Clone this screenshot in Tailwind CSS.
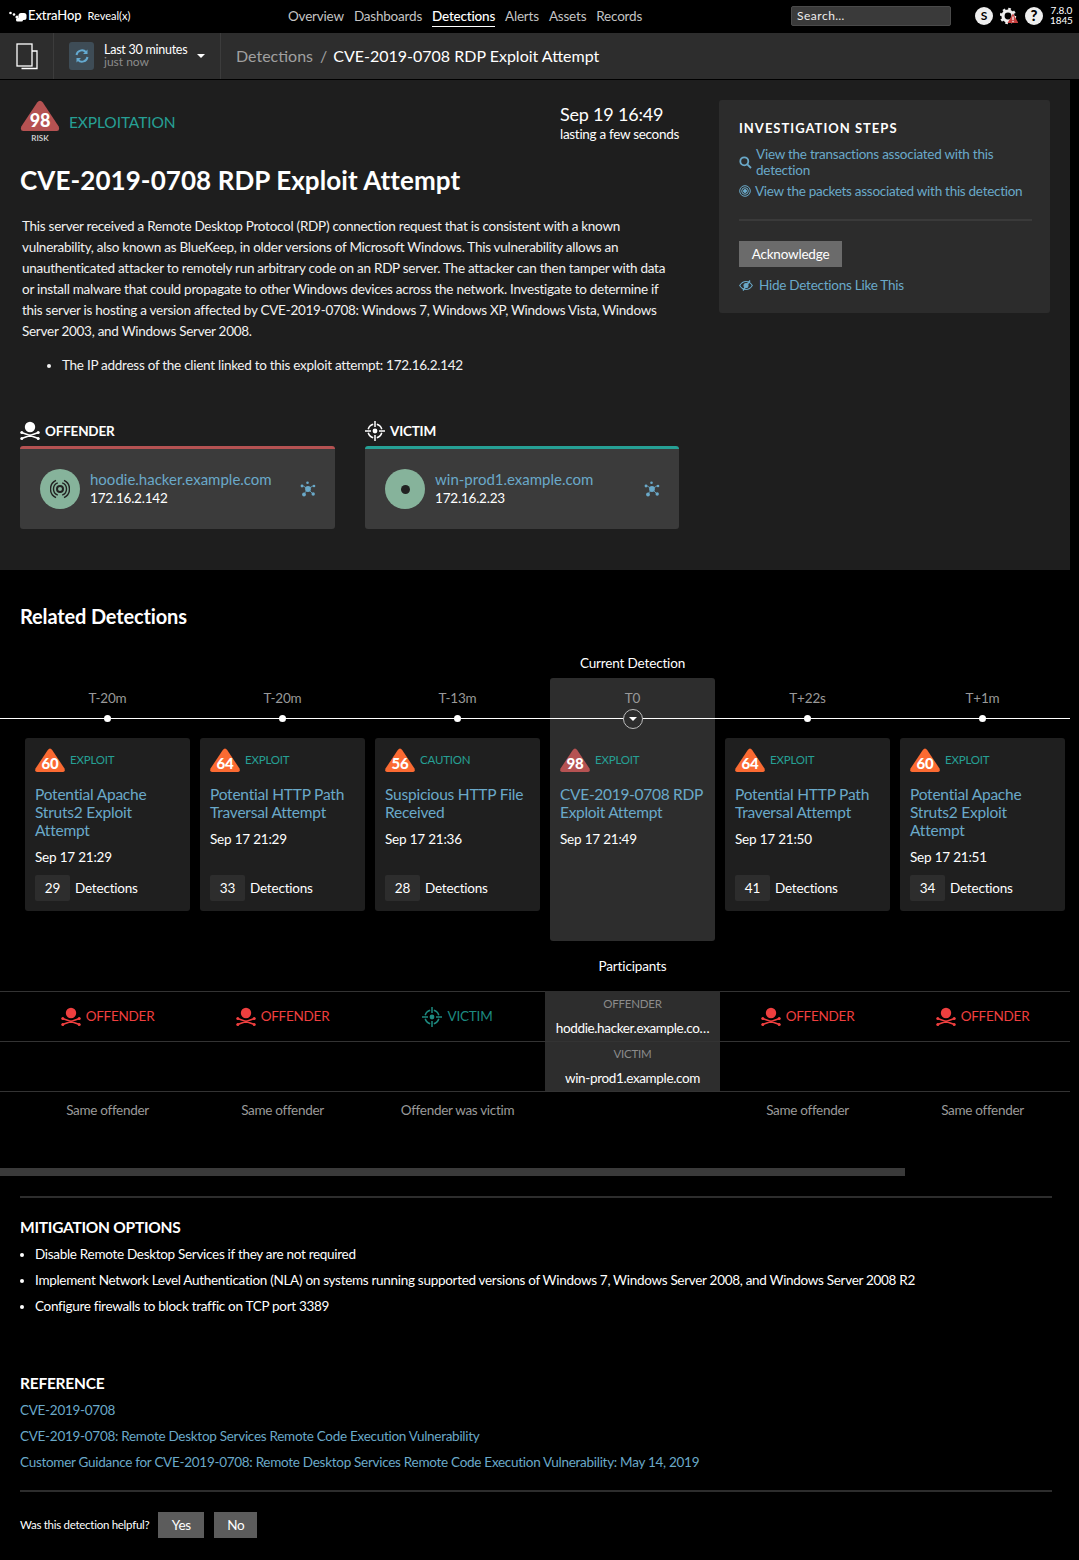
<!DOCTYPE html>
<html lang="en">
<head>
<meta charset="UTF-8">
<title>CVE-2019-0708 RDP Exploit Attempt</title>
<script src="https://cdn.jsdelivr.net/npm/@tailwindcss/browser@4"></script>
</head>
<body class="bg-black text-white font-['Lato',sans-serif] w-[1079px] h-[1560px] overflow-hidden text-[13.5px] tracking-[-0.2px]">
<svg class="hidden">
  <symbol id="skull" viewBox="0 0 20 20">
    <circle cx="10" cy="6" r="5.2"/>
    <path d="M1.5 11.5 L18.5 17.5 M18.5 11.5 L1.5 17.5" stroke="currentColor" stroke-width="1.6" stroke-linecap="round" fill="none"/>
    <circle cx="1.8" cy="11.5" r="1.5"/><circle cx="18.2" cy="11.5" r="1.5"/><circle cx="1.8" cy="17.5" r="1.5"/><circle cx="18.2" cy="17.5" r="1.5"/>
  </symbol>
  <symbol id="target" viewBox="0 0 20 20">
    <circle cx="10" cy="10" r="2.4" fill="currentColor"/>
    <path d="M10 0v6M10 14v6M0 10h6M14 10h6M3.24 8.19A7 7 0 0 1 8.19 3.24M11.81 3.24A7 7 0 0 1 16.76 8.19M16.76 11.81A7 7 0 0 1 11.81 16.76M8.19 16.76A7 7 0 0 1 3.24 11.81" stroke="currentColor" stroke-width="1.5" fill="none"/>
  </symbol>
  <symbol id="cluster" viewBox="0 0 16 16">
    <path d="M8 8L2.5 4.5M8 8L13.5 4.5M8 8L3.5 13.5M8 8L13 13" stroke="#6aa9c9" stroke-width="0.8"/>
    <circle cx="8" cy="8" r="2.9" fill="#6aa9c9"/><circle cx="7.5" cy="1.8" r="1.3" fill="#6aa9c9"/><circle cx="2" cy="5" r="1.4" fill="#6aa9c9"/><circle cx="14" cy="5" r="1.3" fill="#6aa9c9"/><circle cx="4" cy="13.5" r="1.9" fill="#6aa9c9"/><circle cx="13.2" cy="13" r="1.7" fill="#6aa9c9"/>
  </symbol>
  <symbol id="tri" viewBox="0 0 30 24">
    <path d="M15 0.5 Q16.2 0.5 17.2 2 L29.5 20.5 Q30.5 24 28 24 L2 24 Q-0.5 24 0.5 20.5 L12.8 2 Q13.8 0.5 15 0.5Z" fill="currentColor"/>
  </symbol>
</svg>

<!-- top nav -->
<header class="h-[33px] pb-px bg-black flex items-center">
  <div class="w-[288px] flex items-center pl-[9px] gap-px">
    <svg width="18" height="11" viewBox="0 0 18 11" fill="#fff"><circle cx="1.5" cy="2" r="1.3"/><circle cx="5" cy="3.5" r="1.3"/><circle cx="8" cy="6" r="1.6"/><rect x="9.5" y="2" width="8" height="7" rx="2.5"/><rect x="7" y="7" width="7" height="3.5" rx="1.5"/></svg>
    <span class="text-[13px] font-medium tracking-[-0.1px]">ExtraHop</span>
    <span class="text-[11px] ml-[5px] tracking-[0px]">Reveal(x)</span>
  </div>
  <nav class="flex gap-[10px] text-[13.5px] text-[#c4c4c4]">
    <span>Overview</span><span>Dashboards</span><span class="text-white font-medium border-b border-white -mb-px">Detections</span><span>Alerts</span><span>Assets</span><span>Records</span>
  </nav>
  <div class="ml-auto mr-[128px] w-[160px] h-[20px] rounded-[2px] bg-[#3a3a3a] border border-[#4a4a4a] px-[5px] text-[12px] tracking-[0.5px] leading-[18px] text-[#eee]">Search…</div>
  <div class="absolute left-[975px] top-[6px] flex items-center">
    <span class="w-[18px] h-[18px] rounded-full bg-[#eee] text-black text-[12px] font-bold flex items-center justify-center">S</span>
    <svg class="ml-[7px]" width="18" height="18" viewBox="0 0 18 18"><circle cx="8" cy="9" r="5" fill="none" stroke="#eee" stroke-width="3.2"/><circle cx="8" cy="9" r="7" fill="none" stroke="#eee" stroke-width="2.4" stroke-dasharray="2.6 2.9"/><path d="M13 6.5 L18.5 16 L7.5 16Z" fill="#c8403f"/><rect x="12.4" y="9.5" width="1.2" height="3.7" fill="#fff"/><rect x="12.4" y="14" width="1.2" height="1.2" fill="#fff"/></svg>
    <span class="ml-[7px] w-[18px] h-[18px] rounded-full bg-[#eee] text-black text-[15px] font-black flex items-center justify-center">?</span>
    <div class="ml-[7px] text-[10px] leading-[9.5px] text-center tracking-[-0.1px]">7.8.0<br>1845</div>
  </div>
</header>

<!-- sub bar -->
<div class="h-[47px] bg-[#2d2d2d] border-b border-black flex items-center">
  <div class="w-[54px] h-full border-r border-[#3c3c3c] flex items-center justify-center">
    <svg width="22" height="27" viewBox="0 0 22 27" fill="none" stroke="#fff" stroke-width="1.3"><path d="M5.5 25.5H21V8H16"/><rect x="1" y="1" width="15" height="22" fill="#2d2d2d"/></svg>
  </div>
  <div class="w-[167px] h-full border-r border-[#3c3c3c] flex items-center pl-[15px]">
    <div class="w-[25px] h-[28px] rounded-[3px] bg-[#3e4c56] flex items-center justify-center">
      <svg width="14" height="14" viewBox="0 0 14 14" fill="none" stroke="#64a9d0" stroke-width="2"><path d="M1.5 6A5.5 5.5 0 0 1 11 3.2M12.5 8A5.5 5.5 0 0 1 3 10.8"/><path d="M12.5 0.5V5H8Z M1.5 13.5V9H6Z" fill="#64a9d0" stroke="none"/></svg>
    </div>
    <div class="ml-[10px] leading-[12px]">
      <div class="text-[12.5px] text-white tracking-[-0.25px]">Last 30 minutes</div>
      <div class="text-[12px] text-[#8b8b8b] tracking-[0px]">just now</div>
    </div>
    <span class="ml-[10px] w-0 h-0 border-x-[4px] border-x-transparent border-t-[4.5px] border-t-white"></span>
  </div>
  <div class="ml-[15px] text-[16px] text-[#a0a0a0] tracking-[0px]">Detections<span class="ml-[7px] mr-[6px]">/</span><span class="text-white">CVE-2019-0708 RDP Exploit Attempt</span></div>
</div>

<!-- detection panel -->
<section class="w-[1070px] h-[490px] bg-[#1e1e1e] flex">
  <div class="w-[719px] pl-[20px] pt-[20px]">
    <div class="flex justify-between w-[659px]">
      <div class="flex h-[42px]">
        <div class="w-[40px] flex flex-col items-center">
          <div class="relative w-[40px] h-[31px] text-[#b55252]">
            <svg class="absolute inset-0" width="40" height="31"><use href="#tri"/></svg>
            <span class="absolute inset-x-0 top-[9px] text-center text-[18px] leading-[22px] font-black text-white">98</span>
          </div>
          <div class="text-[8px] font-bold leading-[11px] text-[#ccc] mt-[2px] translate-y-[2px] tracking-[0px]">RISK</div>
        </div>
        <div class="ml-[9px] mt-[12px] text-[15.5px] leading-[20px] tracking-[-0.1px] text-[#26a095]">EXPLOITATION</div>
      </div>
      <div class="mt-[4px] w-[119px] whitespace-nowrap">
        <div class="text-[18px] leading-[20px]">Sep 19 16:49</div>
        <div class="text-[13.5px] leading-[20px] tracking-[-0.3px]">lasting a few seconds</div>
      </div>
    </div>
    <h1 class="mt-[18px] text-[26px] leading-[36px] font-bold tracking-[0.08px]">CVE-2019-0708 RDP Exploit Attempt</h1>
    <p class="ml-[2px] mt-[18px] w-[680px] text-[13.5px] leading-[21px] tracking-[-0.27px] text-[#f2f2f2]">This server received a Remote Desktop Protocol (RDP) connection request that is consistent with a known<br>vulnerability, also known as BlueKeep, in older versions of Microsoft Windows. This vulnerability allows an<br>unauthenticated attacker to remotely run arbitrary code on an RDP server. The attacker can then tamper with data<br>or install malware that could propagate to other Windows devices across the network. Investigate to determine if<br>this server is hosting a version affected by CVE-2019-0708: Windows 7, Windows XP, Windows Vista, Windows<br>Server 2003, and Windows Server 2008.</p>
    <ul class="mt-[13px] ml-[42px] list-disc text-[13.5px] leading-[21px] tracking-[-0.27px] text-[#f2f2f2]"><li>The IP address of the client linked to this exploit attempt: 172.16.2.142</li></ul>
    <div class="mt-[45px] flex gap-[30px]">
      <div class="w-[315px]">
        <div class="flex items-center gap-[5px] h-[20px] text-[13.5px] font-bold uppercase"><svg class="text-white fill-current" width="20" height="20"><use href="#skull"/></svg>Offender</div>
        <div class="mt-[5px] h-[83px] bg-[#3b3b3b] rounded-[3px] border-t-[3px] border-[#b55252] flex items-center pl-[20px] pr-[19px]">
          <div class="w-[40px] h-[40px] rounded-full bg-[#86b39b] flex items-center justify-center">
            <svg width="20" height="20" viewBox="0 0 20 20" fill="none" stroke="#222" stroke-width="1.4"><circle cx="10" cy="10" r="3" stroke-width="2"/><path d="M7.78 3.89A6.5 6.5 0 0 0 7.78 16.11M12.22 3.89A6.5 6.5 0 0 1 12.22 16.11M5.99 1.39A9.5 9.5 0 0 0 5.99 18.61M14.01 1.39A9.5 9.5 0 0 1 14.01 18.61"/></svg>
          </div>
          <div class="ml-[10px] leading-[19px]">
            <div class="text-[15px] text-[#6aa9c9] tracking-[0px]">hoodie.hacker.example.com</div>
            <div class="text-[13.5px]">172.16.2.142</div>
          </div>
          <svg class="ml-auto" width="16" height="16"><use href="#cluster"/></svg>
        </div>
      </div>
      <div class="w-[314px]">
        <div class="flex items-center gap-[5px] h-[20px] text-[13.5px] font-bold uppercase"><svg class="text-white" width="20" height="20"><use href="#target"/></svg>Victim</div>
        <div class="mt-[5px] h-[83px] bg-[#3b3b3b] rounded-[3px] border-t-[3px] border-[#26a095] flex items-center pl-[20px] pr-[19px]">
          <div class="w-[40px] h-[40px] rounded-full bg-[#86b39b] flex items-center justify-center"><span class="w-[9px] h-[9px] rounded-full bg-[#222]"></span></div>
          <div class="ml-[10px] leading-[19px]">
            <div class="text-[15px] text-[#6aa9c9] tracking-[0px]">win-prod1.example.com</div>
            <div class="text-[13.5px]">172.16.2.23</div>
          </div>
          <svg class="ml-auto" width="16" height="16"><use href="#cluster"/></svg>
        </div>
      </div>
    </div>
  </div>
  <aside class="mt-[20px] w-[331px] h-[213px] bg-[#2c2c2c] rounded-[3px] pt-[20px] px-[20px]">
    <h2 class="text-[13px] leading-[17px] font-bold tracking-[1px]">INVESTIGATION STEPS</h2>
    <div class="mt-[9px] flex items-center text-[13.5px] leading-[16px] text-[#6aa9c9] tracking-[-0.25px]">
      <svg width="13" height="13" viewBox="0 0 13 13" fill="none" stroke="#6aa9c9" stroke-width="1.8"><circle cx="5.3" cy="5.3" r="4"/><path d="M8.3 8.3L12 12"/></svg>
      <span class="ml-[4px]">View the transactions associated with this<br>detection</span>
    </div>
    <div class="mt-[5px] flex items-center text-[13.5px] leading-[16px] text-[#6aa9c9] tracking-[-0.28px] whitespace-nowrap">
      <svg width="12" height="12" viewBox="0 0 12 12" fill="none" stroke="#6aa9c9"><circle cx="6" cy="6" r="5.3"/><circle cx="6" cy="6" r="3.3"/><circle cx="6" cy="6" r="1.5" fill="#6aa9c9"/></svg>
      <span class="ml-[4px]">View the packets associated with this detection</span>
    </div>
    <div class="mt-[20px] w-[293px] h-[2px] bg-[#3a3a3a] -mr-[2px]"></div>
    <button class="mt-[20px] block w-[103px] h-[26px] bg-[#6b6b6b] text-[13.5px] leading-[26px] text-white tracking-[-0.2px]">Acknowledge</button>
    <div class="mt-[10px] flex items-center text-[13.5px] leading-[17px] text-[#6aa9c9] tracking-[-0.25px]">
      <svg width="14" height="11" viewBox="0 0 14 11" fill="none" stroke="#6aa9c9" stroke-width="1.1"><path d="M0.7 5.5C3 1.8 5 1.5 7 1.5S11 1.8 13.3 5.5C11 9.2 9 9.5 7 9.5S3 9.2 0.7 5.5Z"/><circle cx="7" cy="5.5" r="2" fill="#6aa9c9"/><path d="M11 0.5L4 10.5" stroke-width="1.4"/></svg>
      <span class="ml-[6px]">Hide Detections Like This</span>
    </div>
  </aside>
</section>

<!-- related -->
<section class="relative w-[1070px] h-[606px]">
  <h2 class="pl-[20px] pt-[32px] text-[20px] leading-[28px] font-bold tracking-[-0.15px]">Related Detections</h2>
  <div class="absolute left-[545px] top-[83px] w-[175px] text-center text-[13.5px] leading-[20px] tracking-[-0.15px]">Current Detection</div>

  <div class="absolute left-0 top-[148px] w-[1070px] h-px bg-white z-10"></div>

  <div class="mt-[48px] ml-[20px] grid grid-cols-[repeat(6,175px)] h-[263px]">
    <div class="px-[5px]">
      <div class="h-[40px] pt-[10px] text-center text-[13.5px] leading-[20px] text-[#999]">T-20m</div>
      <div class="h-[20px] flex justify-center items-start relative z-20"><span class="w-[7px] h-[7px] -mt-[3px] rounded-full bg-white"></span></div>
      <div class="h-[173px] bg-[#1f1f1f] rounded-[3px] p-[10px] flex flex-col">
        <div class="flex items-center h-[24px]"><div class="relative w-[30px] h-[24px] text-[#fb6a32]"><svg class="absolute inset-0" width="30" height="24"><use href="#tri"/></svg><span class="absolute inset-x-0 top-[5px] text-center text-[15px] leading-[20px] font-black text-white">60</span></div><span class="ml-[5px] text-[11.5px] text-[#26a095]">EXPLOIT</span></div>
        <div class="mt-[13px] text-[15.5px] leading-[18px] text-[#6aa9c9] tracking-[-0.22px]">Potential Apache<br>Struts2 Exploit<br>Attempt</div>
        <div class="mt-[9px] text-[13.5px] leading-[18px]">Sep 17 21:29</div>
        <div class="mt-auto flex items-center text-[13.5px]"><span class="w-[35px] h-[26px] rounded-[2px] bg-[#2d2d2d] text-center leading-[26px]">29</span><span class="ml-[5px]">Detections</span></div>
      </div>
    </div>
    <div class="px-[5px]">
      <div class="h-[40px] pt-[10px] text-center text-[13.5px] leading-[20px] text-[#999]">T-20m</div>
      <div class="h-[20px] flex justify-center items-start relative z-20"><span class="w-[7px] h-[7px] -mt-[3px] rounded-full bg-white"></span></div>
      <div class="h-[173px] bg-[#1f1f1f] rounded-[3px] p-[10px] flex flex-col">
        <div class="flex items-center h-[24px]"><div class="relative w-[30px] h-[24px] text-[#fb6a32]"><svg class="absolute inset-0" width="30" height="24"><use href="#tri"/></svg><span class="absolute inset-x-0 top-[5px] text-center text-[15px] leading-[20px] font-black text-white">64</span></div><span class="ml-[5px] text-[11.5px] text-[#26a095]">EXPLOIT</span></div>
        <div class="mt-[13px] text-[15.5px] leading-[18px] text-[#6aa9c9] tracking-[-0.22px]">Potential HTTP Path<br>Traversal Attempt</div>
        <div class="mt-[9px] text-[13.5px] leading-[18px]">Sep 17 21:29</div>
        <div class="mt-auto flex items-center text-[13.5px]"><span class="w-[35px] h-[26px] rounded-[2px] bg-[#2d2d2d] text-center leading-[26px]">33</span><span class="ml-[5px]">Detections</span></div>
      </div>
    </div>
    <div class="px-[5px]">
      <div class="h-[40px] pt-[10px] text-center text-[13.5px] leading-[20px] text-[#999]">T-13m</div>
      <div class="h-[20px] flex justify-center items-start relative z-20"><span class="w-[7px] h-[7px] -mt-[3px] rounded-full bg-white"></span></div>
      <div class="h-[173px] bg-[#1f1f1f] rounded-[3px] p-[10px] flex flex-col">
        <div class="flex items-center h-[24px]"><div class="relative w-[30px] h-[24px] text-[#fb6a32]"><svg class="absolute inset-0" width="30" height="24"><use href="#tri"/></svg><span class="absolute inset-x-0 top-[5px] text-center text-[15px] leading-[20px] font-black text-white">56</span></div><span class="ml-[5px] text-[11.5px] text-[#26a095]">CAUTION</span></div>
        <div class="mt-[13px] text-[15.5px] leading-[18px] text-[#6aa9c9] tracking-[-0.22px]">Suspicious HTTP File<br>Received</div>
        <div class="mt-[9px] text-[13.5px] leading-[18px]">Sep 17 21:36</div>
        <div class="mt-auto flex items-center text-[13.5px]"><span class="w-[35px] h-[26px] rounded-[2px] bg-[#2d2d2d] text-center leading-[26px]">28</span><span class="ml-[5px]">Detections</span></div>
      </div>
    </div>
    <div class="px-[5px]">
      <div class="h-full bg-[#2d2d2d] rounded-[3px]">
        <div class="h-[40px] pt-[10px] text-center text-[13.5px] leading-[20px] text-[#999]">T0</div>
        <div class="h-[20px] flex justify-center items-start relative z-20"><span class="w-[20px] h-[20px] -mt-[9px] rounded-full bg-[#2d2d2d] border border-[#bdbdbd] flex items-center justify-center"><span class="w-0 h-0 border-x-[4px] border-x-transparent border-t-[4px] border-t-white"></span></span></div>
        <div class="p-[10px] flex flex-col">
          <div class="flex items-center h-[24px]"><div class="relative w-[30px] h-[24px] text-[#b55252]"><svg class="absolute inset-0" width="30" height="24"><use href="#tri"/></svg><span class="absolute inset-x-0 top-[5px] text-center text-[15px] leading-[20px] font-black text-white">98</span></div><span class="ml-[5px] text-[11.5px] text-[#26a095]">EXPLOIT</span></div>
          <div class="mt-[13px] text-[15.5px] leading-[18px] text-[#6aa9c9] tracking-[-0.3px] whitespace-nowrap">CVE-2019-0708 RDP<br>Exploit Attempt</div>
          <div class="mt-[9px] text-[13.5px] leading-[18px]">Sep 17 21:49</div>
        </div>
      </div>
    </div>
    <div class="px-[5px]">
      <div class="h-[40px] pt-[10px] text-center text-[13.5px] leading-[20px] text-[#999]">T+22s</div>
      <div class="h-[20px] flex justify-center items-start relative z-20"><span class="w-[7px] h-[7px] -mt-[3px] rounded-full bg-white"></span></div>
      <div class="h-[173px] bg-[#1f1f1f] rounded-[3px] p-[10px] flex flex-col">
        <div class="flex items-center h-[24px]"><div class="relative w-[30px] h-[24px] text-[#fb6a32]"><svg class="absolute inset-0" width="30" height="24"><use href="#tri"/></svg><span class="absolute inset-x-0 top-[5px] text-center text-[15px] leading-[20px] font-black text-white">64</span></div><span class="ml-[5px] text-[11.5px] text-[#26a095]">EXPLOIT</span></div>
        <div class="mt-[13px] text-[15.5px] leading-[18px] text-[#6aa9c9] tracking-[-0.22px]">Potential HTTP Path<br>Traversal Attempt</div>
        <div class="mt-[9px] text-[13.5px] leading-[18px]">Sep 17 21:50</div>
        <div class="mt-auto flex items-center text-[13.5px]"><span class="w-[35px] h-[26px] rounded-[2px] bg-[#2d2d2d] text-center leading-[26px]">41</span><span class="ml-[5px]">Detections</span></div>
      </div>
    </div>
    <div class="px-[5px]">
      <div class="h-[40px] pt-[10px] text-center text-[13.5px] leading-[20px] text-[#999]">T+1m</div>
      <div class="h-[20px] flex justify-center items-start relative z-20"><span class="w-[7px] h-[7px] -mt-[3px] rounded-full bg-white"></span></div>
      <div class="h-[173px] bg-[#1f1f1f] rounded-[3px] p-[10px] flex flex-col">
        <div class="flex items-center h-[24px]"><div class="relative w-[30px] h-[24px] text-[#fb6a32]"><svg class="absolute inset-0" width="30" height="24"><use href="#tri"/></svg><span class="absolute inset-x-0 top-[5px] text-center text-[15px] leading-[20px] font-black text-white">60</span></div><span class="ml-[5px] text-[11.5px] text-[#26a095]">EXPLOIT</span></div>
        <div class="mt-[13px] text-[15.5px] leading-[18px] text-[#6aa9c9] tracking-[-0.22px]">Potential Apache<br>Struts2 Exploit<br>Attempt</div>
        <div class="mt-[9px] text-[13.5px] leading-[18px]">Sep 17 21:51</div>
        <div class="mt-auto flex items-center text-[13.5px]"><span class="w-[35px] h-[26px] rounded-[2px] bg-[#2d2d2d] text-center leading-[26px]">34</span><span class="ml-[5px]">Detections</span></div>
      </div>
    </div>
  </div>

  <div class="mt-[15px] ml-[545px] w-[175px] text-center text-[13.5px] leading-[20px] tracking-[-0.15px]">Participants</div>

  <div class="mt-[15px] border-t border-[#333] h-[50px] grid grid-cols-[repeat(6,175px)] pl-[20px]">
    <div class="flex items-center justify-center gap-[5px] text-[13.5px] uppercase text-[#ef3f3f] tracking-[-0.25px]"><svg class="fill-current" width="20" height="20"><use href="#skull"/></svg>Offender</div>
    <div class="flex items-center justify-center gap-[5px] text-[13.5px] uppercase text-[#ef3f3f] tracking-[-0.25px]"><svg class="fill-current" width="20" height="20"><use href="#skull"/></svg>Offender</div>
    <div class="flex items-center justify-center gap-[5px] text-[13.5px] uppercase text-[#1d8a80] tracking-[-0.2px]"><svg width="20" height="20"><use href="#target"/></svg>Victim</div>
    <div class="bg-[#2d2d2d] text-center -mt-px">
      <div class="pt-[5px] text-[11.5px] leading-[16px] text-[#8b8b8b]">OFFENDER</div>
      <div class="mt-[6px] text-[13.5px] leading-[20px] tracking-[-0.36px]">hoddie.hacker.example.co…</div>
    </div>
    <div class="flex items-center justify-center gap-[5px] text-[13.5px] uppercase text-[#ef3f3f] tracking-[-0.25px]"><svg class="fill-current" width="20" height="20"><use href="#skull"/></svg>Offender</div>
    <div class="flex items-center justify-center gap-[5px] text-[13.5px] uppercase text-[#ef3f3f] tracking-[-0.25px]"><svg class="fill-current" width="20" height="20"><use href="#skull"/></svg>Offender</div>
  </div>
  <div class="border-t border-b border-[#333] h-[51px] grid grid-cols-[repeat(6,175px)] pl-[20px]">
    <div></div><div></div><div></div>
    <div class="bg-[#2d2d2d] text-center">
      <div class="pt-[4px] text-[11.5px] leading-[16px] text-[#8b8b8b]">VICTIM</div>
      <div class="mt-[6px] text-[13.5px] leading-[20px] tracking-[-0.36px]">win-prod1.example.com</div>
    </div>
  </div>
  <div class="h-[36px] grid grid-cols-[repeat(6,175px)] pl-[20px] text-center text-[13.5px] leading-[36px] tracking-[-0.3px] text-[#9a9a9a]">
    <div>Same offender</div><div>Same offender</div><div>Offender was victim</div><div></div><div>Same offender</div><div>Same offender</div>
  </div>
  <div class="absolute left-0 top-[598px] w-[905px] h-[8px] bg-[#3a3a3a]"></div>
</section>

<!-- bottom -->
<section class="pl-[20px] pr-[27px]">
  <div class="mt-[20px] h-[2px] bg-[#2d2d2d]"></div>
  <h3 class="mt-[19px] text-[15.5px] leading-[20px] font-bold tracking-[-0.25px]">MITIGATION OPTIONS</h3>
  <ul class="mt-[4px] ml-[15px] list-disc text-[13.5px] leading-[26px] tracking-[-0.3px] marker:text-white">
    <li>Disable Remote Desktop Services if they are not required</li>
    <li>Implement Network Level Authentication (NLA) on systems running supported versions of Windows 7, Windows Server 2008, and Windows Server 2008 R2</li>
    <li>Configure firewalls to block traffic on TCP port 3389</li>
  </ul>
  <h3 class="mt-[54px] text-[15.5px] leading-[20px] font-bold tracking-[-0.25px]">REFERENCE</h3>
  <div class="mt-[4px] text-[13.5px] leading-[26px] tracking-[-0.28px] text-[#6aa9c9]">
    <div>CVE-2019-0708</div>
    <div>CVE-2019-0708: Remote Desktop Services Remote Code Execution Vulnerability</div>
    <div>Customer Guidance for CVE-2019-0708: Remote Desktop Services Remote Code Execution Vulnerability: May 14, 2019</div>
  </div>
  <div class="mt-[15px] h-[2px] bg-[#2d2d2d]"></div>
  <div class="mt-[20px] flex items-center">
    <span class="text-[11.5px] tracking-[-0.28px]">Was this detection helpful?</span>
    <button class="ml-[9px] w-[46px] h-[26px] bg-[#5c5c5c] text-[13.5px]">Yes</button>
    <button class="ml-[10px] w-[43px] h-[26px] bg-[#5c5c5c] text-[13.5px]">No</button>
  </div>
</section>
</body>
</html>
